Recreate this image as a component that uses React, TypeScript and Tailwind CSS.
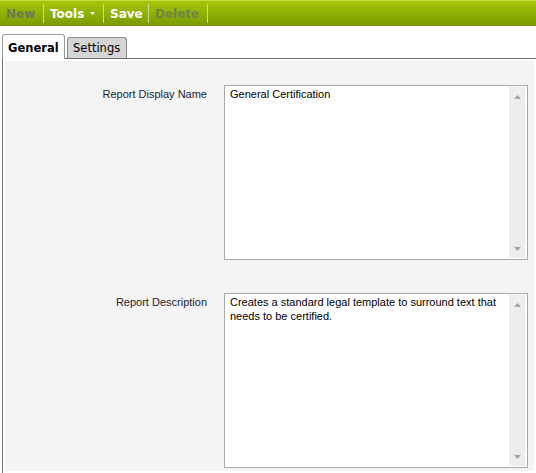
import React from 'react';

function Sep() {
  return <div className="w-px h-[19px] bg-[#c9df86]" />;
}

function Toolbar() {
  return (
    <div className="h-[26px] border-t border-[#c8de3e] bg-linear-to-b from-[#a7c70b] to-[#789a00] flex items-center text-[12px] font-bold font-['DejaVu_Sans',sans-serif]">
      <div className="w-[43px] pl-[6px] text-[#6a7a50]">New</div>
      <Sep />
      <div className="w-[59px] pl-[6px] text-white flex items-center">
        <span>Tools</span>
        <svg width="5" height="3" viewBox="0 0 5 3" className="ml-[6px]">
          <path d="M0 0h5L2.5 3z" fill="#fff" />
        </svg>
      </div>
      <Sep />
      <div className="w-[44px] pl-[6px] text-white">Save</div>
      <Sep />
      <div className="w-[58px] pl-[6px] text-[#6e8448]">Delete</div>
      <Sep />
    </div>
  );
}

function Field({ text }: { text: string }) {
  return (
    <div className="w-[304px] h-[175px] border border-[#a9a9a9] bg-white flex p-px">
      <div className="flex-1 pl-[4px] text-[11px] leading-[14px] text-black font-['Liberation_Sans',Arial,sans-serif]">
        {text}
      </div>
      <div className="w-[16px] mr-px bg-[#ededed] flex flex-col justify-between items-center pt-[8px] pb-[7px]">
        <svg width="7" height="4" viewBox="0 0 7 4">
          <path d="M3.5 0L7 4H0z" fill="#a3a3a3" />
        </svg>
        <svg width="7" height="4" viewBox="0 0 7 4">
          <path d="M0 0h7L3.5 4z" fill="#a3a3a3" />
        </svg>
      </div>
    </div>
  );
}

function Row({ label, text, className = '' }: { label: string; text: string; className?: string }) {
  return (
    <div className={`flex ${className}`}>
      <div className="w-[202px] pt-[2px] text-right text-[11px] leading-[14px] text-[#1c1c2a] font-['Liberation_Sans',Arial,sans-serif]">
        {label}
      </div>
      <div className="ml-[17px]">
        <Field text={text} />
      </div>
    </div>
  );
}

export default function App() {
  return (
    <div className="min-h-screen bg-white flex flex-col overflow-hidden">
      <Toolbar />
      <div className="ml-[2px] pt-[8px] flex items-end gap-[2px] relative z-10 -mb-px text-[11.5px] font-['DejaVu_Sans',sans-serif] text-black">
        <div className="w-[63px] h-[25px] pl-[5px] pt-[5px] bg-white border border-b-0 border-[#9a9a9a] rounded-t-[3px] font-bold">
          General
        </div>
        <div className="w-[60px] h-[21px] mb-px pl-[5px] pt-[2px] bg-[#d5d5d5] border border-b-0 border-[#8a8a8a] rounded-t-[3px]">
          Settings
        </div>
      </div>
      <div className="flex-1 ml-[2px] border-t border-l border-[#707070] bg-white p-[2px] flex flex-col">
        <div className="flex-1 bg-[#f4f4f4] pt-[24px]">
          <Row label="Report Display Name" text="General Certification" />
          <Row
            className="mt-[33px]"
            label="Report Description"
            text="Creates a standard legal template to surround text that needs to be certified."
          />
        </div>
      </div>
    </div>
  );
}
